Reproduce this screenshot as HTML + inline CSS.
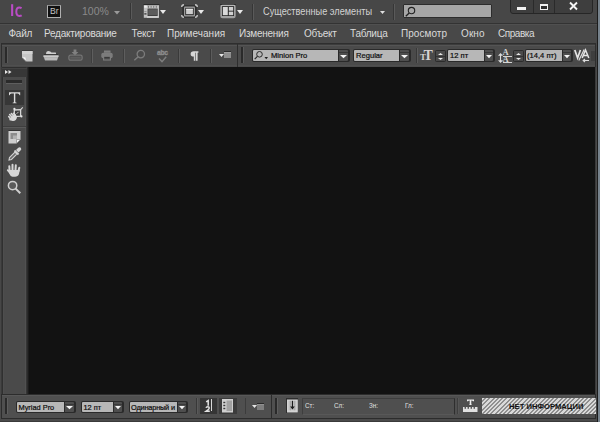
<!DOCTYPE html>
<html><head><meta charset="utf-8">
<style>
*{margin:0;padding:0;box-sizing:border-box}
html,body{width:600px;height:422px;overflow:hidden;background:#4a4a4a;font-family:"Liberation Sans",sans-serif;position:relative}
.a{position:absolute}
.t{position:absolute;white-space:nowrap;line-height:1}
.m{position:absolute;white-space:nowrap;line-height:1;font-size:10px;letter-spacing:-0.25px;color:#dadada;top:28.6px}
svg{position:absolute;overflow:visible}
</style></head><body>
<div class="a" style="left:597px;top:0px;width:1px;height:422px;background:#1c1c1c;"></div>
<div class="a" style="left:598px;top:0px;width:2px;height:422px;background:#76828c;"></div>
<div class="a" style="left:0px;top:0px;width:597px;height:23px;background:#474747;"></div>
<div class="a" style="left:0px;top:23px;width:597px;height:1px;background:#333333;"></div>
<div class="a" style="left:0px;top:24px;width:597px;height:1px;background:#505050;"></div>
<svg style="left:10px;top:3px" width="14" height="15" viewBox="0 0 14 15"><rect x="1.1" y="1.2" width="2.1" height="11.8" fill="#b94cc4"/><path d="M11.6 5.2 Q10.6 4.6 9.3 4.6 Q6.3 4.6 6.3 8.8 Q6.3 12.9 9.3 12.9 Q10.7 12.9 11.7 12.3" fill="none" stroke="#b94cc4" stroke-width="2"/></svg>
<div class="a" style="left:47px;top:5px;width:14px;height:13px;background:#101010;border:1px solid #b0b0b0;border-top-color:#8a8a8a"></div>
<div class="t" style="left:50px;top:6.6px;font-size:8.6px;color:#c4c4c4;">Br</div>
<div class="t" style="left:82px;top:6px;font-size:10.5px;color:#8a8a8a;">100%</div>
<svg style="left:114px;top:10.5px" width="6" height="3.5" viewBox="0 0 6 3.5"><path d="M0 0 H6 L3.0 3.5 Z" fill="#9a9a9a"/></svg>
<div class="a" style="left:130px;top:3px;width:1px;height:16px;background:#363636;"></div>
<div class="a" style="left:131px;top:3px;width:1px;height:16px;background:#5a5a5a;"></div>
<svg style="left:143px;top:4px" width="17" height="15" viewBox="0 0 17 15"><rect x="0.5" y="0" width="16" height="1" fill="#2c2c2c"/>
<rect x="0.8" y="1.2" width="15.2" height="12.6" fill="#c2c2c2"/>
<rect x="1.2" y="1.5" width="2.6" height="2.2" fill="#f0f0f0"/>
<rect x="5" y="1.8" width="1" height="2" fill="#7a7a7a"/><rect x="7.6" y="1.8" width="1" height="2" fill="#7a7a7a"/><rect x="10.2" y="1.8" width="1" height="2" fill="#7a7a7a"/><rect x="12.8" y="1.8" width="1" height="2" fill="#7a7a7a"/>
<rect x="1.3" y="7.2" width="2.2" height="0.9" fill="#8a8a8a"/><rect x="1.3" y="9.3" width="2.2" height="1.2" fill="#2a2a2a"/>
<rect x="4.6" y="4.6" width="10" height="7.4" fill="#2e2e2e"/>
<rect x="5.2" y="5.2" width="8.8" height="6.2" fill="#5c5c5c"/>
<rect x="4" y="12.6" width="11.5" height="1" fill="#e2e2e2"/></svg>
<svg style="left:160px;top:10px" width="6" height="4" viewBox="0 0 6 4"><path d="M0 0 H6 L3.0 4 Z" fill="#e8e8e8"/></svg>
<svg style="left:181px;top:4px" width="17" height="15" viewBox="0 0 17 15"><rect x="1.3" y="1.3" width="14.4" height="12.4" rx="2" fill="#2e2e2e"/>
<rect x="3" y="2.6" width="11" height="9.8" rx="1" fill="#9a9a9a"/>
<rect x="4.3" y="3.9" width="8.4" height="7.2" fill="#262626"/>
<rect x="5.1" y="4.8" width="6.8" height="5.4" fill="#cdcdcd"/>
<rect x="5.1" y="4.8" width="6.8" height="1" fill="#eeeeee"/>
<path d="M0.7 3 Q0.7 0.7 3 0.7" stroke="#c4c4c4" stroke-width="1.4" fill="none"/>
<path d="M14 0.7 Q16.3 0.7 16.3 3" stroke="#c4c4c4" stroke-width="1.4" fill="none"/>
<path d="M0.7 11 Q0.7 13.3 3 13.3" stroke="#c4c4c4" stroke-width="1.4" fill="none"/>
<path d="M14 13.3 Q16.3 13.3 16.3 11" stroke="#c4c4c4" stroke-width="1.4" fill="none"/></svg>
<svg style="left:198px;top:10px" width="6" height="4" viewBox="0 0 6 4"><path d="M0 0 H6 L3.0 4 Z" fill="#e8e8e8"/></svg>
<svg style="left:220px;top:4px" width="16" height="15" viewBox="0 0 16 15"><rect x="0" y="0" width="16" height="1" fill="#2e2e2e"/>
<rect x="0.3" y="0.8" width="15.4" height="13.4" rx="2.2" fill="#a0a0a0"/>
<rect x="0.8" y="1.3" width="14.4" height="1" fill="#c0c0c0"/>
<rect x="2" y="2.2" width="12" height="9.8" fill="#242424"/>
<rect x="2.8" y="3" width="5" height="8.2" fill="#d8d8d8"/>
<rect x="8.8" y="3" width="4.4" height="3.7" fill="#d0d0d0"/>
<rect x="8.8" y="7.6" width="4.4" height="3.6" fill="#d0d0d0"/></svg>
<svg style="left:237px;top:10px" width="6" height="4" viewBox="0 0 6 4"><path d="M0 0 H6 L3.0 4 Z" fill="#e8e8e8"/></svg>
<div class="a" style="left:252px;top:4px;width:1px;height:16px;background:#363636;"></div>
<div class="a" style="left:253px;top:4px;width:1px;height:16px;background:#5a5a5a;"></div>
<div class="t" style="left:263px;top:6px;font-size:10.8px;color:#d2d2d2;transform:scaleX(0.85);transform-origin:0 0">Существенные элементы</div>
<svg style="left:380px;top:11px" width="5" height="3" viewBox="0 0 5 3"><path d="M0 0 H5 L2.5 3 Z" fill="#e0e0e0"/></svg>
<div class="a" style="left:393px;top:4px;width:1px;height:16px;background:#363636;"></div>
<div class="a" style="left:394px;top:4px;width:1px;height:16px;background:#5a5a5a;"></div>
<div class="a" style="left:403px;top:4px;width:89px;height:14px;background:#a6a6a6;border:1px solid #2c2c2c;border-radius:1px"></div>
<svg style="left:405px;top:7px" width="12" height="10" viewBox="0 0 12 10"><circle cx="6.5" cy="3.6" r="3.2" fill="none" stroke="#222" stroke-width="1.1"/>
<line x1="4.2" y1="6" x2="0.8" y2="9.3" stroke="#222" stroke-width="1.3"/></svg>
<div class="a" style="left:510px;top:-3px;width:83px;height:17px;background:#3e3e3e;border:1px solid #262626;border-radius:3px"></div>
<div class="a" style="left:533px;top:0px;width:1px;height:13px;background:#2a2a2a;"></div>
<div class="a" style="left:554px;top:0px;width:1px;height:13px;background:#2a2a2a;"></div>
<div class="a" style="left:517px;top:7.2px;width:9px;height:2.6px;background:#f2f2f2;"></div>
<div class="a" style="left:540px;top:4px;width:8px;height:6px;background:#2e2e2e;border:1.6px solid #f2f2f2;border-top-width:2.2px"></div>
<svg style="left:569px;top:2px" width="9" height="8" viewBox="0 0 9 8"><path d="M1 0.5 L8 7.5 M8 0.5 L1 7.5" stroke="#f4f4f4" stroke-width="1.9"/></svg>
<div class="a" style="left:0px;top:25px;width:597px;height:18px;background:#484848;"></div>
<div class="m" style="left:8.5px;letter-spacing:-0.25px">Файл</div>
<div class="m" style="left:44px;letter-spacing:-0.25px">Редактирование</div>
<div class="m" style="left:131.5px;letter-spacing:-0.25px">Текст</div>
<div class="m" style="left:167px;letter-spacing:0.05px">Примечания</div>
<div class="m" style="left:239px;letter-spacing:-0.25px">Изменения</div>
<div class="m" style="left:304px;letter-spacing:-0.25px">Объект</div>
<div class="m" style="left:350px;letter-spacing:-0.25px">Таблица</div>
<div class="m" style="left:401px;letter-spacing:0.05px">Просмотр</div>
<div class="m" style="left:461px;letter-spacing:0.1px">Окно</div>
<div class="m" style="left:498px;letter-spacing:-0.45px">Справка</div>
<div class="a" style="left:1px;top:43px;width:595px;height:25px;background:#2e2e2e;"></div>
<div class="a" style="left:596px;top:43px;width:1px;height:25px;background:#474747;"></div>
<div class="a" style="left:2px;top:44px;width:235px;height:1px;background:#3c3c3c;"></div>
<div class="a" style="left:238px;top:44px;width:357px;height:1px;background:#3c3c3c;"></div>
<div class="a" style="left:2px;top:45px;width:235px;height:22px;background:#4a4a4a;"></div>
<div class="a" style="left:2px;top:45px;width:235px;height:1px;background:#545454;"></div>
<div class="a" style="left:238px;top:45px;width:357px;height:22px;background:#4a4a4a;"></div>
<div class="a" style="left:238px;top:45px;width:357px;height:1px;background:#545454;"></div>
<div class="a" style="left:2px;top:65px;width:235px;height:1px;background:#4f4f4f;"></div>
<div class="a" style="left:238px;top:65px;width:357px;height:1px;background:#4f4f4f;"></div>
<div class="a" style="left:5px;top:47px;width:2px;height:16px;background:#2a2a2a;border-right:1px solid #5a5a5a;box-sizing:content-box"></div>
<div class="a" style="left:241px;top:47px;width:2px;height:16px;background:#2a2a2a;border-right:1px solid #5a5a5a;box-sizing:content-box"></div>
<svg style="left:22px;top:50px" width="11" height="12" viewBox="0 0 11 12"><rect x="0" y="0" width="11" height="1" fill="#3a3a3a"/>
<path d="M0 1 H10.5 V11.5 H4 L0 7.5 Z" fill="#c6c6c6"/>
<path d="M0 1 H10.5 V4 H0 Z" fill="#d2d2d2"/>
<path d="M0 7.5 Q2.5 7 3.5 7.5 L4 11.5 Z" fill="#f2f2f2"/>
<path d="M0 7.5 L4 11.5" stroke="#555" stroke-width="0.8"/></svg>
<svg style="left:43px;top:50px" width="16" height="11" viewBox="0 0 16 11"><path d="M3 4.3 Q3 1 5.5 1 Q7.5 1 8.5 2.6 H12.5 Q13 2.6 13 3.3 V4.3 Z" fill="#cfcfcf"/>
<rect x="1" y="4.3" width="14" height="1" fill="#2c2c2c"/>
<path d="M0.5 5.5 H15.5 V6.5 L14 10.5 H2 L0.5 6.5 Z" fill="#b0b0b0"/>
<rect x="0.5" y="5.5" width="15" height="1.2" fill="#d6d6d6"/>
<rect x="2" y="8.5" width="12" height="1" fill="#c4c4c4"/></svg>
<svg style="left:68px;top:49px" width="15" height="12" viewBox="0 0 15 12"><path d="M5.6 0.6 H8.4 V3 H10.4 L7 6.6 L3.6 3 H5.6 Z" fill="#808080"/>
<rect x="0.9" y="6.2" width="13.2" height="5" rx="1.6" fill="none" stroke="#747474" stroke-width="1.3"/>
<rect x="2.2" y="7.6" width="10.6" height="2.2" fill="#5e5e5e"/></svg>
<div class="a" style="left:91px;top:49px;width:1px;height:14px;background:#3e3e3e;"></div>
<div class="a" style="left:92px;top:49px;width:1px;height:14px;background:#5e5e5e;"></div>
<svg style="left:101px;top:50px" width="12" height="11" viewBox="0 0 12 11"><rect x="3" y="0.5" width="6.5" height="2.3" fill="#7e7e7e"/>
<rect x="0.3" y="2.8" width="11.4" height="5.4" rx="1.8" fill="#7c7c7c"/>
<rect x="2.6" y="6.2" width="6.8" height="3.8" fill="#4a4a4a" stroke="#7e7e7e" stroke-width="1.1"/>
<rect x="3.6" y="7" width="4.8" height="1" fill="#3a3a3a"/></svg>
<div class="a" style="left:123px;top:49px;width:1px;height:14px;background:#3e3e3e;"></div>
<div class="a" style="left:124px;top:49px;width:1px;height:14px;background:#5e5e5e;"></div>
<svg style="left:133px;top:49px" width="13" height="12" viewBox="0 0 13 12"><circle cx="7.8" cy="5.1" r="3.7" fill="none" stroke="#7c7c7c" stroke-width="1.3"/>
<line x1="5.2" y1="7.7" x2="1.3" y2="11.2" stroke="#7c7c7c" stroke-width="1.5"/></svg>
<div class="t" style="left:157px;top:49.5px;font-size:6.8px;color:#8c8c8c;font-weight:bold;letter-spacing:-0.3px;-webkit-text-stroke:0.35px #8c8c8c">abc</div>
<svg style="left:158px;top:56px" width="9" height="7" viewBox="0 0 9 7"><path d="M1 2.6 L4 5.6 L8.2 0.7" stroke="#7e7e7e" stroke-width="1.4" fill="none"/></svg>
<div class="a" style="left:178px;top:49px;width:1px;height:14px;background:#3a3a3a;"></div>
<div class="a" style="left:179px;top:49px;width:1px;height:14px;background:#5c5c5c;"></div>
<svg style="left:190px;top:51px" width="9" height="10" viewBox="0 0 9 10"><path d="M3.8 0.3 H8.4 V1.8 H7.6 V9.8 H6 V1.8 H5.4 V9.8 H3.8 V5.6 Q0.6 5.6 0.6 3 Q0.6 0.3 3.8 0.3 Z" fill="#d8d8d8"/></svg>
<div class="a" style="left:210px;top:49px;width:1px;height:14px;background:#3a3a3a;"></div>
<div class="a" style="left:211px;top:49px;width:1px;height:14px;background:#5c5c5c;"></div>
<svg style="left:219px;top:54px" width="5" height="3" viewBox="0 0 5 3"><path d="M0 0 H5 L2.5 3 Z" fill="#e6e6e6"/></svg>
<div class="a" style="left:224px;top:51px;width:7px;height:1px;background:#2a2a2a;"></div>
<div class="a" style="left:224px;top:52px;width:7px;height:6px;background:#8e8e8e;"></div>
<div class="a" style="left:224px;top:52px;width:7px;height:1px;background:#a0a0a0;"></div>
<div class="a" style="left:252px;top:49px;width:98px;height:13px;background:#2a2a2a;border-radius:2px"></div>
<div class="a" style="left:253px;top:50px;width:85px;height:11px;background:#b7b7b7;border-radius:1px 0 0 1px"></div>
<div class="a" style="left:339px;top:50px;width:9px;height:11px;background:#4e4e4e;border-radius:0 1px 1px 0"></div>
<div class="a" style="left:339px;top:52px;width:9px;height:1px;background:#383838;"></div>
<svg style="left:340px;top:55px" width="7" height="3.2" viewBox="0 0 7 3.2"><path d="M0 0 H7 L3.5 3.2 Z" fill="#f4f4f4"/></svg>
<svg style="left:254px;top:51px" width="15" height="9" viewBox="0 0 15 9"><circle cx="5.5" cy="3.3" r="2.8" fill="none" stroke="#2a2a2a" stroke-width="1"/>
<line x1="3.4" y1="5.4" x2="0.7" y2="8.2" stroke="#2a2a2a" stroke-width="1.2"/>
<path d="M10.5 6 H14 L12.25 8.2 Z" fill="#1e1e1e"/></svg>
<div class="t" style="left:271px;top:52px;font-size:7.6px;color:#0c0c0c;-webkit-text-stroke:0.2px #0c0c0c">Minion Pro</div>
<div class="a" style="left:353px;top:49px;width:58px;height:13px;background:#2a2a2a;border-radius:2px"></div>
<div class="a" style="left:354px;top:50px;width:45px;height:11px;background:#b7b7b7;border-radius:1px 0 0 1px"></div>
<div class="a" style="left:400px;top:50px;width:9px;height:11px;background:#4e4e4e;border-radius:0 1px 1px 0"></div>
<div class="a" style="left:400px;top:52px;width:9px;height:1px;background:#383838;"></div>
<svg style="left:401px;top:55px" width="7" height="3.2" viewBox="0 0 7 3.2"><path d="M0 0 H7 L3.5 3.2 Z" fill="#f4f4f4"/></svg>
<div class="t" style="left:356px;top:52px;font-size:7.6px;color:#0c0c0c;letter-spacing:0px;-webkit-text-stroke:0.2px #0c0c0c">Regular</div>
<div class="a" style="left:416px;top:48px;width:1px;height:15px;background:#383838;"></div>
<div class="a" style="left:417px;top:48px;width:1px;height:15px;background:#5a5a5a;"></div>
<div class="t" style="left:420px;top:53.2px;font-size:9px;color:#d4d4d4;font-family:'Liberation Serif',serif;font-weight:bold">T</div>
<div class="t" style="left:423.6px;top:48.6px;font-size:14px;color:#d4d4d4;font-family:'Liberation Serif',serif;font-weight:bold">T</div>
<div class="a" style="left:435px;top:50px;width:11px;height:12px;background:#2c2c2c;border-radius:2px"></div>
<div class="a" style="left:436px;top:51px;width:9px;height:10px;background:#4a4a4a;"></div>
<div class="a" style="left:436px;top:56px;width:9px;height:1px;background:#333;"></div>
<svg style="left:438px;top:52.5px" width="5" height="7" viewBox="0 0 5 7"><path d="M0 2 L2.5 0 L5 2 Z M0 5 L2.5 7 L5 5 Z" fill="#e8e8e8"/></svg>
<div class="a" style="left:447px;top:49px;width:48px;height:13px;background:#2a2a2a;border-radius:2px"></div>
<div class="a" style="left:448px;top:50px;width:36px;height:11px;background:#b7b7b7;border-radius:1px 0 0 1px"></div>
<div class="a" style="left:485px;top:50px;width:8px;height:11px;background:#4e4e4e;border-radius:0 1px 1px 0"></div>
<div class="a" style="left:485px;top:52px;width:8px;height:1px;background:#383838;"></div>
<svg style="left:486px;top:55px" width="6" height="3.2" viewBox="0 0 6 3.2"><path d="M0 0 H6 L3.0 3.2 Z" fill="#f4f4f4"/></svg>
<div class="t" style="left:450px;top:52px;font-size:7.6px;color:#0c0c0c;letter-spacing:0px;-webkit-text-stroke:0.2px #0c0c0c">12 пт</div>
<div class="t" style="left:502.5px;top:48.3px;font-size:8.5px;color:#d4d4d4;font-family:'Liberation Serif',serif;font-weight:bold">A</div>
<div class="t" style="left:502.5px;top:55.3px;font-size:8.5px;color:#d4d4d4;font-family:'Liberation Serif',serif;font-weight:bold">A</div>
<div class="a" style="left:502.5px;top:55.5px;width:9px;height:1px;background:#d4d4d4;"></div>
<div class="a" style="left:502.5px;top:62px;width:9px;height:1px;background:#d4d4d4;"></div>
<svg style="left:497.5px;top:53px" width="5" height="10" viewBox="0 0 5 10"><path d="M2.5 1.5 V8.5" stroke="#dcdcdc" stroke-width="1.1"/><path d="M0 2.8 L2.5 0 L5 2.8 Z M0 7.2 L2.5 10 L5 7.2 Z" fill="#dcdcdc"/></svg>
<div class="a" style="left:513px;top:50px;width:11px;height:12px;background:#2c2c2c;border-radius:2px"></div>
<div class="a" style="left:514px;top:51px;width:9px;height:10px;background:#4a4a4a;"></div>
<div class="a" style="left:514px;top:56px;width:9px;height:1px;background:#333;"></div>
<svg style="left:516px;top:52.5px" width="5" height="7" viewBox="0 0 5 7"><path d="M0 2 L2.5 0 L5 2 Z M0 5 L2.5 7 L5 5 Z" fill="#e8e8e8"/></svg>
<div class="a" style="left:525px;top:49px;width:48px;height:13px;background:#2a2a2a;border-radius:2px"></div>
<div class="a" style="left:526px;top:50px;width:36px;height:11px;background:#b7b7b7;border-radius:1px 0 0 1px"></div>
<div class="a" style="left:563px;top:50px;width:8px;height:11px;background:#4e4e4e;border-radius:0 1px 1px 0"></div>
<div class="a" style="left:563px;top:52px;width:8px;height:1px;background:#383838;"></div>
<svg style="left:564px;top:55px" width="6" height="3.2" viewBox="0 0 6 3.2"><path d="M0 0 H6 L3.0 3.2 Z" fill="#f4f4f4"/></svg>
<div class="t" style="left:527px;top:52px;font-size:7.6px;color:#0c0c0c;letter-spacing:0px;-webkit-text-stroke:0.2px #0c0c0c">(14,4 пт)</div>
<svg style="left:574px;top:49px" width="16" height="14" viewBox="0 0 16 14"><path d="M0.8 1 L3.6 9 L6.4 1" stroke="#e4e4e4" stroke-width="1.7" fill="none"/>
<path d="M4.8 11.5 L10.2 0.5" stroke="#e4e4e4" stroke-width="1.1"/>
<path d="M8.2 9 L11.5 1 L14.8 9 M9.4 6.5 H13.6" stroke="#e4e4e4" stroke-width="1.5" fill="none"/>
<path d="M15 11.5 H9.5 M11 10 L9.2 11.5 L11 13" stroke="#dcdcdc" stroke-width="1.1" fill="none"/></svg>
<div class="a" style="left:591px;top:51px;width:4px;height:10px;background:#3e3e3e;"></div>
<div class="a" style="left:0px;top:67px;width:1px;height:328px;background:#474747;"></div>
<div class="a" style="left:1px;top:67px;width:1px;height:328px;background:#3a3a3a;"></div>
<div class="a" style="left:2px;top:67px;width:1px;height:328px;background:#303030;"></div>
<div class="a" style="left:26px;top:67px;width:1px;height:328px;background:#353535;"></div>
<div class="a" style="left:27px;top:67px;width:1px;height:328px;background:#2a2a2a;"></div>
<div class="a" style="left:28px;top:67px;width:1px;height:328px;background:#1c1c1c;"></div>
<div class="a" style="left:29px;top:67px;width:566px;height:327px;background:#121212;"></div>
<div class="a" style="left:595px;top:67px;width:1px;height:328px;background:#3a3a3a;"></div>
<div class="a" style="left:596px;top:67px;width:1px;height:328px;background:#4a4a4a;"></div>
<div class="a" style="left:2px;top:68px;width:25px;height:9px;background:#373737;"></div>
<div class="a" style="left:2px;top:68px;width:25px;height:1px;background:#424242;"></div>
<div class="a" style="left:3px;top:77px;width:23px;height:317px;background:#4a4a4a;"></div>
<div class="a" style="left:3px;top:77px;width:1px;height:317px;background:#4e4e4e;"></div>
<div class="a" style="left:25px;top:77px;width:1px;height:317px;background:#515151;"></div>
<svg style="left:5px;top:70px" width="7" height="4" viewBox="0 0 7 4"><path d="M0 0 L3 2 L0 4 Z M3.5 0 L6.5 2 L3.5 4 Z" fill="#e6e6e6"/></svg>
<div class="a" style="left:6px;top:80px;width:16px;height:3px;background:#2a2a2a;box-shadow:0 1px 0 #5e5e5e"></div>
<div class="a" style="left:5px;top:90px;width:19px;height:15px;background:#373737;"></div>
<svg style="left:9px;top:92px" width="12" height="12" viewBox="0 0 12 12"><path d="M0 0.3 H11.2 V3.2 H10.6 Q10.3 1.4 8.6 1.4 H6.3 V10 Q6.3 10.6 7.6 10.7 V11.2 H3.6 V10.7 Q4.9 10.6 4.9 10 V1.4 H2.6 Q0.9 1.4 0.6 3.2 H0 Z" fill="#dcdcdc"/></svg>
<svg style="left:6px;top:106px" width="18" height="16" viewBox="0 0 18 16"><path d="M8.3 4 L14.6 3.6 L14.6 10.2 L8.3 10.6 Z" fill="#3a3a3a" stroke="#d8d8d8" stroke-width="1.3"/>
<path d="M14.6 3.6 L16.8 1.4" stroke="#d8d8d8" stroke-width="1.1"/>
<circle cx="8.4" cy="2.9" r="1.1" fill="#e6e6e6"/><circle cx="15.4" cy="10.4" r="1.1" fill="#e6e6e6"/>
<path d="M10.6 7.8 L12.6 5.8" stroke="#cfcfcf" stroke-width="0.9"/>
<g transform="translate(0.6 0.8) rotate(-40 7 11) translate(7 11) scale(0.86) translate(-7 -11)">
<path d="M3.6 9.5 L3.6 6.3 M5.9 9 L5.9 5.2 M8.2 9 L8.2 5.6 M10.4 9.6 L10.4 7" stroke="#d8d8d8" stroke-width="1.9" stroke-linecap="round"/>
<path d="M2.6 8.6 H11.4 L11 12 Q10 14.6 7.3 14.6 Q4.3 14.6 3.3 12.2 L1.5 10 Z" fill="#d8d8d8"/>
</g></svg>
<div class="a" style="left:3px;top:126px;width:23px;height:1px;background:#3e3e3e;"></div>
<div class="a" style="left:3px;top:127px;width:23px;height:1px;background:#5a5a5a;"></div>
<svg style="left:8px;top:130px" width="13" height="14" viewBox="0 0 13 14"><rect x="0.5" y="0" width="12" height="1" fill="#333"/>
<path d="M0.5 1 H12.5 V9.5 L8.5 13.5 H0.5 Z" fill="#cdcdcd"/>
<rect x="2.5" y="3" width="6.5" height="6" fill="#8c8c8c"/>
<rect x="5" y="5.5" width="4" height="3.5" fill="#b0b0b0"/>
<path d="M12.5 9.5 L8.5 9.5 L8.5 13.5 Z" fill="#f2f2f2" stroke="#666" stroke-width="0.5"/></svg>
<svg style="left:8px;top:146px" width="14" height="15" viewBox="0 0 14 15"><path d="M1 14 L1.5 11.5 L7 6 L9 8 L3.5 13.5 Z" fill="#6a6a6a" stroke="#d0d0d0" stroke-width="1.1"/>
<path d="M8 4 L10 2 Q11.5 0.5 12.8 1.8 Q14 3.2 12.5 4.5 L10.5 6.5 Z" fill="#d6d6d6"/>
<path d="M6.5 4.5 L10.5 8.5" stroke="#d6d6d6" stroke-width="1.8"/></svg>
<svg style="left:7px;top:163px" width="15" height="15" viewBox="0 0 15 15"><path d="M2.6 8 L2.3 3.2 M5.5 7 L5.5 1.8 M8.5 7 L8.8 2.2 M11.5 8 L12.3 4.8" stroke="#d6d6d6" stroke-width="2" stroke-linecap="round"/>
<path d="M3.5 10.5 L0.8 7.2" stroke="#d6d6d6" stroke-width="1.9" stroke-linecap="round"/>
<path d="M1.8 7 H12.8 L12 11 Q11 13.8 8 13.8 H5.5 Q3.5 13.8 2.5 11 Z" fill="#d6d6d6"/></svg>
<svg style="left:7px;top:180px" width="15" height="15" viewBox="0 0 15 15"><circle cx="5.6" cy="5.6" r="4.2" fill="#5a5a5a" stroke="#cfcfcf" stroke-width="1.5"/>
<line x1="8.6" y1="8.6" x2="13.3" y2="13.3" stroke="#d0d0d0" stroke-width="2"/></svg>
<div class="a" style="left:1px;top:394px;width:595px;height:25px;background:#2c2c2c;"></div>
<div class="a" style="left:596px;top:394px;width:1px;height:25px;background:#474747;"></div>
<div class="a" style="left:2px;top:395px;width:269px;height:23px;background:#4f4f4f;"></div>
<div class="a" style="left:2px;top:395px;width:269px;height:1px;background:#585858;"></div>
<div class="a" style="left:272px;top:395px;width:323px;height:23px;background:#4f4f4f;"></div>
<div class="a" style="left:272px;top:395px;width:323px;height:1px;background:#585858;"></div>
<div class="a" style="left:0px;top:419px;width:597px;height:3px;background:#4a4a4a;"></div>
<div class="a" style="left:0px;top:421px;width:597px;height:1px;background:#3a3a3a;"></div>
<div class="a" style="left:5px;top:398px;width:2px;height:16px;background:#2a2a2a;border-right:1px solid #5e5e5e;box-sizing:content-box"></div>
<div class="a" style="left:275px;top:398px;width:2px;height:16px;background:#2a2a2a;border-right:1px solid #5e5e5e;box-sizing:content-box"></div>
<div class="a" style="left:16px;top:401px;width:60px;height:12px;background:#2a2a2a;border-radius:2px"></div>
<div class="a" style="left:17px;top:402px;width:47px;height:10px;background:#b7b7b7;border-radius:1px 0 0 1px"></div>
<div class="a" style="left:65px;top:402px;width:9px;height:10px;background:#4e4e4e;border-radius:0 1px 1px 0"></div>
<div class="a" style="left:65px;top:404px;width:9px;height:1px;background:#383838;"></div>
<svg style="left:66px;top:406px" width="7" height="3.2" viewBox="0 0 7 3.2"><path d="M0 0 H7 L3.5 3.2 Z" fill="#f4f4f4"/></svg>
<div class="t" style="left:18.5px;top:403.5px;font-size:7.4px;color:#0c0c0c;letter-spacing:0px;-webkit-text-stroke:0.2px #0c0c0c">Myriad Pro</div>
<div class="a" style="left:81px;top:401px;width:43px;height:12px;background:#2a2a2a;border-radius:2px"></div>
<div class="a" style="left:82px;top:402px;width:31px;height:10px;background:#b7b7b7;border-radius:1px 0 0 1px"></div>
<div class="a" style="left:114px;top:402px;width:8px;height:10px;background:#4e4e4e;border-radius:0 1px 1px 0"></div>
<div class="a" style="left:114px;top:404px;width:8px;height:1px;background:#383838;"></div>
<svg style="left:115px;top:406px" width="6" height="3.2" viewBox="0 0 6 3.2"><path d="M0 0 H6 L3.0 3.2 Z" fill="#f4f4f4"/></svg>
<div class="t" style="left:83.5px;top:403.5px;font-size:7.4px;color:#0c0c0c;letter-spacing:0px;-webkit-text-stroke:0.2px #0c0c0c">12 пт</div>
<div class="a" style="left:129px;top:401px;width:59px;height:12px;background:#2a2a2a;border-radius:2px"></div>
<div class="a" style="left:130px;top:402px;width:47px;height:10px;background:#b7b7b7;border-radius:1px 0 0 1px"></div>
<div class="a" style="left:178px;top:402px;width:8px;height:10px;background:#4e4e4e;border-radius:0 1px 1px 0"></div>
<div class="a" style="left:178px;top:404px;width:8px;height:1px;background:#383838;"></div>
<svg style="left:179px;top:406px" width="6" height="3.2" viewBox="0 0 6 3.2"><path d="M0 0 H6 L3.0 3.2 Z" fill="#f4f4f4"/></svg>
<div class="t" style="left:131px;top:403.5px;font-size:7.4px;color:#0c0c0c;letter-spacing:-0.2px;-webkit-text-stroke:0.2px #0c0c0c">Одинарный и</div>
<div class="a" style="left:196px;top:398px;width:1px;height:16px;background:#383838;"></div>
<div class="a" style="left:197px;top:398px;width:1px;height:16px;background:#5a5a5a;"></div>
<div class="a" style="left:200px;top:398px;width:17px;height:16px;background:#353535;"></div>
<svg style="left:204.5px;top:400px" width="6" height="12" viewBox="0 0 6 12"><path d="M1.2 1.9 L3.2 0.6 V5.8" stroke="#e2e2e2" stroke-width="1.5" fill="none"/><path d="M1 7.9 Q1.3 6.7 2.7 6.7 Q4.3 6.7 4.3 8 Q4.3 9.2 1.2 11.2 H4.8" stroke="#e2e2e2" stroke-width="1.4" fill="none"/></svg>
<div class="a" style="left:211px;top:399px;width:1.3px;height:12px;background:#d8d8d8;"></div>
<div class="a" style="left:219px;top:398px;width:18px;height:16px;background:#3c3c3c;"></div>
<svg style="left:222px;top:399px" width="11" height="14" viewBox="0 0 11 14"><rect x="0" y="0" width="11" height="13.5" fill="#d0d0d0"/>
<rect x="4.5" y="1.5" width="5.5" height="10.5" fill="#a2a2a2"/>
<rect x="1.3" y="2.8" width="2" height="1.4" fill="#3a3a3a"/><rect x="1.3" y="5.8" width="2" height="1.4" fill="#3a3a3a"/><rect x="1.3" y="8.8" width="2" height="1.4" fill="#3a3a3a"/></svg>
<div class="a" style="left:245px;top:398px;width:1px;height:16px;background:#3c3c3c;"></div>
<svg style="left:252px;top:405px" width="5" height="3" viewBox="0 0 5 3"><path d="M0 0 H5 L2.5 3 Z" fill="#e6e6e6"/></svg>
<div class="a" style="left:257px;top:403px;width:7px;height:1px;background:#2a2a2a;"></div>
<div class="a" style="left:257px;top:404px;width:7px;height:6px;background:#7e7e7e;"></div>
<div class="a" style="left:257px;top:404px;width:7px;height:1px;background:#909090;"></div>
<div class="a" style="left:286px;top:398px;width:12px;height:15px;background:#2e2e2e;"></div>
<svg style="left:287px;top:399px" width="11" height="14" viewBox="0 0 11 14"><rect x="0" y="0.5" width="10.8" height="13" fill="#d4d4d4"/><rect x="1.5" y="1.8" width="7.8" height="9.5" fill="#bdbdbd"/><rect x="3" y="1.8" width="1" height="9.5" fill="#a8a8a8"/><rect x="6.8" y="1.8" width="1" height="9.5" fill="#a8a8a8"/><rect x="4.9" y="1.8" width="1.1" height="6.5" fill="#1a1a1a"/><path d="M3.1 7.6 H7.8 L5.45 10.4 Z" fill="#1a1a1a"/></svg>
<div class="a" style="left:302px;top:398px;width:153px;height:17px;background:transparent;border:1px solid #3e3e3e;border-right-color:#2e2e2e;border-bottom-color:#585858"></div>
<div class="t" style="left:305px;top:402px;font-size:7px;color:#e0e0e0;transform:scaleX(0.9);transform-origin:0 0">Ст:</div>
<div class="t" style="left:334px;top:402px;font-size:7px;color:#e0e0e0;transform:scaleX(0.9);transform-origin:0 0">Сл:</div>
<div class="t" style="left:369px;top:402px;font-size:7px;color:#e0e0e0;transform:scaleX(0.9);transform-origin:0 0">Зн:</div>
<div class="t" style="left:405px;top:402px;font-size:7px;color:#e0e0e0;transform:scaleX(0.9);transform-origin:0 0">Гл:</div>
<div class="a" style="left:457px;top:398px;width:1px;height:16px;background:#3e3e3e;"></div>
<div class="a" style="left:458px;top:398px;width:1px;height:16px;background:#565656;"></div>
<svg style="left:463px;top:399px" width="15" height="14" viewBox="0 0 15 14"><path d="M4 0.5 H11 V2.2 H10 Q9.8 1.5 8.3 1.5 V5.3 L9 6 H6 L6.7 5.3 V1.5 Q5.2 1.5 5 2.2 H4 Z" fill="#ececec"/><rect x="0" y="8" width="14.5" height="5" fill="#e0e0e0"/><rect x="1.6" y="8" width="1.3" height="1.8" fill="#4a4a4a"/><rect x="4.6" y="8" width="1.3" height="1.8" fill="#4a4a4a"/><rect x="7.6" y="8" width="1.3" height="1.8" fill="#4a4a4a"/><rect x="10.6" y="8" width="1.3" height="1.8" fill="#4a4a4a"/></svg>
<div class="a" style="left:482px;top:398px;width:114px;height:16px;background:#aaa;background:repeating-linear-gradient(-45deg,#d9d9d9 0 1.6px,#8e8e8e 1.6px 3px)"></div>
<div class="t" style="left:509px;top:403.3px;font-size:7.5px;color:#111;font-weight:bold;transform:scaleX(1.02);transform-origin:0 0">НЕТ ИНФОРМАЦИИ</div>
</body></html>
